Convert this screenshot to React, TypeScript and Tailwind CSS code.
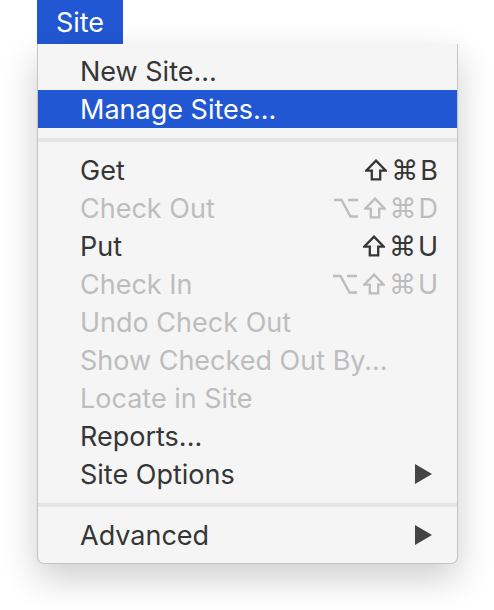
import React from 'react';

type Key = 'opt' | 'shift' | 'cmd' | string;

type MenuItem =
  | { kind: 'item'; label: string; keys?: Key[]; disabled?: boolean; active?: boolean; submenu?: boolean }
  | { kind: 'sep' };

const items: MenuItem[] = [
  { kind: 'item', label: 'New Site...' },
  { kind: 'item', label: 'Manage Sites...', active: true },
  { kind: 'sep' },
  { kind: 'item', label: 'Get', keys: ['shift', 'cmd', 'B'] },
  { kind: 'item', label: 'Check Out', keys: ['opt', 'shift', 'cmd', 'D'], disabled: true },
  { kind: 'item', label: 'Put', keys: ['shift', 'cmd', 'U'] },
  { kind: 'item', label: 'Check In', keys: ['opt', 'shift', 'cmd', 'U'], disabled: true },
  { kind: 'item', label: 'Undo Check Out', disabled: true },
  { kind: 'item', label: 'Show Checked Out By...', disabled: true },
  { kind: 'item', label: 'Locate in Site', disabled: true },
  { kind: 'item', label: 'Reports...' },
  { kind: 'item', label: 'Site Options', submenu: true },
  { kind: 'sep' },
  { kind: 'item', label: 'Advanced', submenu: true },
];

const ShiftGlyph = () => (
  <svg width="22" height="22" viewBox="0 0 22 22" className="mr-[4px]">
    <path
      d="M11 1.6 L20.8 11.6 L15.2 11.6 L15.2 20.4 L6.8 20.4 L6.8 11.6 L1.2 11.6 Z"
      fill="none"
      stroke="currentColor"
      strokeWidth="2.3"
      strokeLinejoin="miter"
    />
  </svg>
);

const OptionGlyph = () => (
  <svg width="24" height="22" viewBox="0 0 24 22" className="mr-[6px]">
    <path
      d="M0 3 L7.5 3 L16.5 19.5 L24 19.5 M14 3 L24 3"
      fill="none"
      stroke="currentColor"
      strokeWidth="2.4"
    />
  </svg>
);

const Shortcut = ({ keys }: { keys: Key[] }) => (
  <span className="flex items-center leading-none">
    {keys.map((k, i) =>
      k === 'opt' ? (
        <OptionGlyph key={i} />
      ) : k === 'shift' ? (
        <ShiftGlyph key={i} />
      ) : k === 'cmd' ? (
        <span key={i} className="font-['DejaVu_Sans',sans-serif] text-[27px] mr-[2px]">
          ⌘
        </span>
      ) : (
        <span key={i} className="text-[27px]">
          {k}
        </span>
      )
    )}
  </span>
);

const SubmenuArrow = () => (
  <svg width="17" height="20" viewBox="0 0 17 20" className="mr-[6px]">
    <polygon points="0,0 17,10 0,20" fill="#444444" />
  </svg>
);

export default function App() {
  return (
    <div className="w-[494px] h-[610px] bg-white font-['Inter','Liberation_Sans',sans-serif]">
      <div className="ml-[37px] w-[86px] h-[44px] bg-[#2257d3] flex items-center justify-center">
        <span className="text-white text-[27px] leading-none">Site</span>
      </div>

      <div className="ml-[37px] w-[421px] bg-[#f5f5f5] border border-t-0 border-[#c4c4c4] rounded-b-[7px] pt-[8px] pb-[9px] shadow-[0_14px_36px_rgba(0,0,0,0.2)]">
        {items.map((it, i) =>
          it.kind === 'sep' ? (
            <div key={i} className="h-[4px] bg-[#e4e4e4] mt-[10px] mb-[9px]" />
          ) : (
            <div
              key={i}
              className={
                'h-[38px] flex items-center pl-[42px] pr-[19px] text-[27px] ' +
                (it.active
                  ? 'bg-[#2257d3] text-white'
                  : it.disabled
                    ? 'text-[#bdbdbd]'
                    : 'text-[#363636]')
              }
            >
              <span className="flex-1 leading-none">{it.label}</span>
              {it.keys && <Shortcut keys={it.keys} />}
              {it.submenu && <SubmenuArrow />}
            </div>
          )
        )}
      </div>
    </div>
  );
}
